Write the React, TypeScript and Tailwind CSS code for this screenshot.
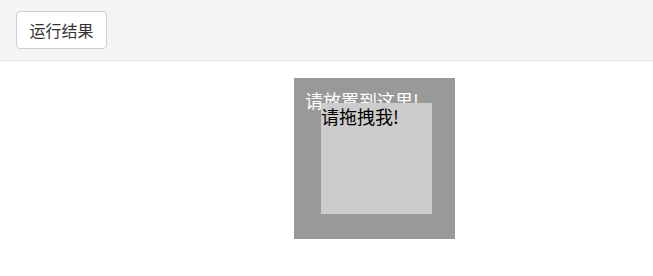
export default function App() {
  return (
    <div className="min-h-screen bg-white font-['Noto_Sans_CJK_SC','Noto_Sans',sans-serif]">
      {/* toolbar */}
      <div className="flex h-[61px] items-center border-b border-[#e3e3e3] bg-[#f5f5f5] pl-[16px]">
        <button className="h-[38px] w-[91px] rounded-[4px] border border-[#cfcfcf] bg-white text-[16px] leading-none text-[#333]">
          运行结果
        </button>
      </div>

      {/* drop zone */}
      <div className="pt-[17px]">
        <div className="relative ml-[294px] h-[161px] w-[161px] bg-[#999999] pl-[11px] pt-[9px] text-[18px] leading-[26px] text-white">
          请放置到这里!
          <div className="absolute left-[27px] top-[25px] h-[111px] w-[111px] bg-[#cccccc] text-[18px] leading-[26px] text-black">
            请拖拽我!
          </div>
        </div>
      </div>
    </div>
  );
}
